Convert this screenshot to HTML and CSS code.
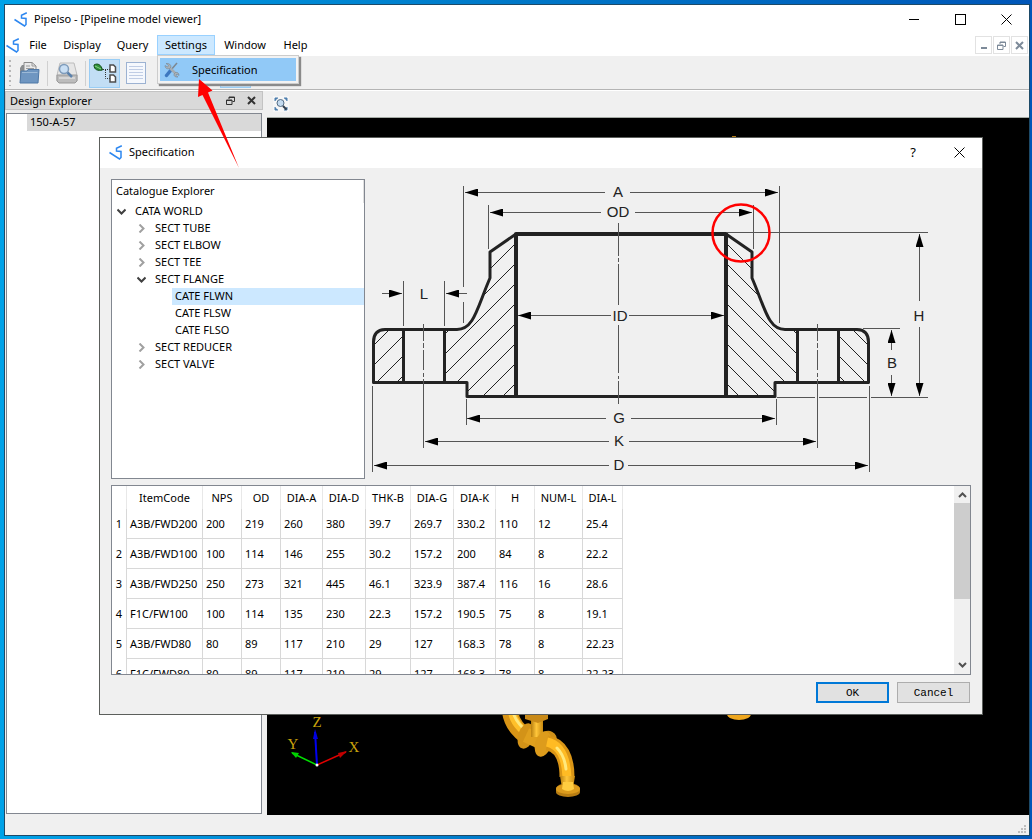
FILE: index.html
```html
<!DOCTYPE html>
<html lang="en">
    <head>
        <meta charset="utf-8">
        <title>Pipelso - [Pipeline model viewer]</title>
        <link rel="stylesheet" href="styles.css">
    </head>
    <body>
        <!-- shared symbols -->
        <svg class="defs" aria-hidden="true">
            <symbol id="logo" viewBox="0 0 14 15">
                <path d="M.5 7.5L10.5 14L12 12.500V6.500L7.500 6V3.200L12.800 .8" fill="none" stroke="#2d87f0" stroke-width="1.500"/>
            </symbol>
            <symbol id="cross" viewBox="0 0 11 11">
                <path d="M.5 .5L10.500 10.500M10.500 .5L.5 10.500" stroke="#000" fill="none"/>
            </symbol>
            <symbol id="restore" viewBox="0 0 9 9">
                <path d="M3 3V1H8.500V5.500H6.500M3 1.500H8.500" fill="none" stroke="currentColor"/>
                <path d="M.5 4H6V8.500H.5ZM.5 4.500H6" fill="none" stroke="currentColor"/>
            </symbol>
            <symbol id="small_cross" viewBox="0 0 9 9">
                <path d="M1 1L8 8M8 1L1 8" fill="none" stroke="currentColor" stroke-width="2"/>
            </symbol>
            <symbol id="open" viewBox="0 0 9 9">
                <path d="M.5 2.500L4.500 6.500L8.500 2.500" fill="none" stroke="#404040" stroke-width="2"/>
            </symbol>
            <symbol id="closed" viewBox="0 0 9 9">
                <path d="M2.500 .5L6.500 4.500L2.500 8.500" fill="none" stroke="#a0a0a0" stroke-width="2"/>
            </symbol>
        </svg>

        <div class="window">
            <header class="titlebar">
                <svg class="logo"><use href="#logo"/></svg>
                <span class="title">Pipelso - [Pipeline model viewer]</span>
                <button class="ctl" aria-label="Minimize"><svg width="11" height="11"><path d="M0 5.500H10" stroke="#000"/></svg></button>
                <button class="ctl" aria-label="Maximize"><svg width="11" height="11"><rect x=".5" y=".5" width="10" height="10" fill="none" stroke="#000"/></svg></button>
                <button class="ctl" aria-label="Close"><svg width="11" height="11"><use href="#cross"/></svg></button>
            </header>

            <nav class="menubar">
                <svg class="logo"><use href="#logo"/></svg>
                <button class="menu file">File</button>
                <button class="menu display">Display</button>
                <button class="menu query">Query</button>
                <div class="menu_holder">
                    <button class="menu settings active">Settings</button>
                    <div class="popup">
                        <button class="popup_item">
                            <svg width="16" height="16" viewBox="0 0 16 16">
                                <path d="M13 1L6.500 8.500" stroke="#7d8790" stroke-width="1.500"/>
                                <path d="M7 8L2.500 13.500" stroke="#3d78c0" stroke-width="3.500" stroke-linecap="round"/>
                                <path d="M4.500 4.500L12.500 12.500" stroke="#a4acb3" stroke-width="2.500"/>
                                <path d="M2 1.500L4.500 3.500L3.500 5L1 3.500C1 6 3 7.500 5.500 6.500L7 5C7 2.500 5 1 2 1.500ZM10 12C9.500 14 11.500 15.500 14 15L11.800 13.200L13 12L15 13.500C15 11 13.500 10 11.500 10.500Z" fill="#a9b1b8" stroke="#6f7a84" stroke-width=".5"/>
                            </svg>
                            Specification
                        </button>
                    </div>
                </div>
                <button class="menu win">Window</button>
                <button class="menu help">Help</button>
                <div class="mdi">
                    <button aria-label="Minimize view"><svg width="9" height="9"><rect x="2" y="6" width="6" height="2" fill="currentColor"/></svg></button>
                    <button aria-label="Restore view"><svg width="9" height="9"><use href="#restore"/></svg></button>
                    <button aria-label="Close view"><svg width="9" height="9"><use href="#small_cross"/></svg></button>
                </div>
            </nav>

            <div class="toolbar">
                <span class="grip"></span>
                <button class="tool" aria-label="Open">
                    <svg width="24" height="24" viewBox="0 0 24 24">
                        <path d="M3 20V7L5 4H9V20Z" fill="#8a8d90"/>
                        <path d="M7 12V1.500H15L19 5V12Z" fill="#e9e9e9" stroke="#8b8b8b"/>
                        <path d="M15 1.500V5H19M9 5H13M9 7.500H17" fill="none" stroke="#9a9a9a"/>
                        <path d="M4 10H10L11 8.500H22L21 22H3Z" fill="#6f96c1" stroke="#4f78a6"/>
                        <path d="M5 11.500H20.500" stroke="#9cb9d7"/>
                    </svg>
                </button>
                <span class="sep"></span>
                <button class="tool" aria-label="Print preview">
                    <svg width="24" height="24" viewBox="0 0 24 24">
                        <path d="M5 2H19L22 14V20H2V14Z" fill="#e6e6e6" stroke="#bcbcbc"/>
                        <path d="M2 14H22V20L20 22H4L2 20Z" fill="#bcbcbc" stroke="#999"/>
                        <path d="M4 17H20" stroke="#efefef"/>
                        <circle cx="9" cy="8" r="4.500" fill="#c9dff4" stroke="#7f9cbb" stroke-width="1.500"/>
                        <path d="M12.500 11.500L17 16" stroke="#5c82ac" stroke-width="2.500"/>
                    </svg>
                </button>
                <span class="sep"></span>
                <button class="tool on" aria-label="Design explorer">
                    <svg width="24" height="24" viewBox="0 0 24 24">
                        <path d="M1 4C4 2 8 3 9.500 9C5 10 1 9 1 4Z" fill="#2f9138" stroke="#154d1b"/>
                        <path d="M2 5L8 8" stroke="#8bd38a"/>
                        <path d="M10 8.500H17M12.500 9V17.500H17" fill="none" stroke="#333" stroke-dasharray="1 1"/>
                        <path d="M17 4H20.500L22.500 6V11H17ZM17 14H20.500L22.500 16V21H17Z" fill="#fff" stroke="#4d4d4d" stroke-width="1.500"/>
                    </svg>
                </button>
                <button class="tool" aria-label="List">
                    <svg width="24" height="24" viewBox="0 0 24 24">
                        <rect x="2.500" y="1.500" width="19" height="21" fill="#f5f8fd" stroke="#9cb2d2"/>
                        <path d="M5 5.500H19M5 8.500H19M5 11.500H19M5 14.500H19M5 17.500H19" stroke="#c0cde5"/>
                    </svg>
                </button>
                <button class="tool" aria-label="Print">
                    <svg width="24" height="24" viewBox="0 0 24 24"><rect x="3" y="10" width="18" height="14" rx="3" fill="#6d6d6d"/></svg>
                </button>
                <span class="sep"></span>
                <button class="tool" aria-label="Select"></button>
                <button class="tool on" aria-label="Zoom">
                    <svg width="24" height="24" viewBox="0 0 24 24"><path d="M12 15L20 23" stroke="#2f6fb5" stroke-width="4"/></svg>
                </button>
                <span class="sep"></span>
                <button class="tool" aria-label="Rotate">
                    <svg width="24" height="24" viewBox="0 0 24 24"><circle cx="13" cy="15" r="8" fill="#6f747b"/></svg>
                </button>
            </div>

            <div class="main">
                <aside class="dock">
                    <div class="dock_title">
                        <span>Design Explorer</span>
                        <button aria-label="Float"><svg width="9" height="9"><use href="#restore"/></svg></button>
                        <button aria-label="Close explorer"><svg width="9" height="9"><use href="#small_cross"/></svg></button>
                    </div>
                    <ul class="design_tree">
                        <li>150-A-57</li>
                    </ul>
                </aside>
                <section class="view">
                    <div class="view_bar">
                        <button aria-label="Zoom extents">
                            <svg width="16" height="16" viewBox="0 0 16 16">
                                <path d="M2 5V2H5M11 2H14V5M14 11V14H11M5 14H2V11" fill="#4d7fae" stroke="#4d7fae"/>
                                <circle cx="7.500" cy="7" r="3.500" fill="#c4dbf0" stroke="#536c85"/>
                                <path d="M10 10L13.500 13.500" stroke="#333f4c" stroke-width="2"/>
                            </svg>
                        </button>
                    </div>
                    <div class="canvas">
                        <svg viewBox="267 118 762 697" preserveAspectRatio="xMinYMin meet">
                            <defs>
                                <linearGradient id="pipe" x1="0" y1="0" x2="1" y2="0">
                                    <stop offset="0" stop-color="#b87f10"/>
                                    <stop offset=".45" stop-color="#ffc63a"/>
                                    <stop offset="1" stop-color="#c98a10"/>
                                </linearGradient>
                            </defs>
                            <path d="M732 137V136H736V137H764V140H732Z" fill="#b47b12"/>
                            <!-- valve and elbow -->
                            <path d="M510 712C512 724 519 732 529 738" fill="none" stroke="#d99516" stroke-width="16"/>
                            <path d="M512 712C514 723 521 730 531 736" fill="none" stroke="#ffc02a" stroke-width="8"/>
                            <path d="M513 712C515 720 519 724 523 728" fill="none" stroke="#ffe87c" stroke-width="3"/>
                            <ellipse cx="526" cy="736" rx="8" ry="13" transform="rotate(18 526 736)" fill="#d39318"/>
                            <path d="M526 735L550 746" stroke="#e0a01e" stroke-width="15"/>
                            <rect x="531" y="716" width="12" height="21" fill="url(#pipe)"/>
                            <path d="M525 712H548V719L538 723L525 719Z" fill="#c98a18"/>
                            <ellipse cx="549" cy="738" rx="8" ry="7" transform="rotate(25 549 738)" fill="#cf9018"/>
                            <ellipse cx="543" cy="744" rx="8" ry="13" transform="rotate(15 543 744)" fill="#dd9c1c"/>
                            <path d="M547 743C561 745 567 758 567 777" fill="none" stroke="#d99516" stroke-width="15"/>
                            <path d="M547 742C561 745 566 758 567 777" fill="none" stroke="#ffbb24" stroke-width="9"/>
                            <path d="M557 748C562 753 565 760 566 769" fill="none" stroke="#ffe87c" stroke-width="3" stroke-linecap="round"/>
                            <path d="M560 776H575L573 788H562Z" fill="url(#pipe)"/>
                            <path d="M556 789A12 6 0 0 1 580 789V792A12 5 0 0 1 556 792Z" fill="#b87d12"/>
                            <ellipse cx="568" cy="789" rx="12" ry="5" fill="#dc9b1c"/>
                            <path d="M563 782H573L574 789Q568 793 562 789Z" fill="#ffcc40"/>
                            <ellipse cx="739" cy="714" rx="12" ry="6" fill="#efa71e"/>
                            <!-- axes -->
                            <path d="M317 765L292 753" stroke="#00e000" stroke-width="1.500"/>
                            <path d="M291 752L299 753L296 758Z" fill="#00d000"/>
                            <path d="M317 765L346 752" stroke="#e00000" stroke-width="1.500"/>
                            <path d="M347 751L338 753L340 758Z" fill="#c00000"/>
                            <path d="M317 765L315 732" stroke="#0000f0" stroke-width="2"/>
                            <path d="M315 729L313 739H318Z" fill="#0000e0"/>
                            <circle cx="317" cy="765" r="1.500" fill="#fff"/>
                            <g class="axis_name">
                                <text x="317" y="727">Z</text>
                                <text x="293" y="749">Y</text>
                                <text x="354" y="752">X</text>
                            </g>
                        </svg>
                    </div>
                </section>
            </div>
            <footer class="statusbar">
                <svg width="9" height="9"><path d="M6 0h2v2h-2zM3 3h2v2h-2zM6 3h2v2h-2zM0 6h2v2h-2zM3 6h2v2h-2zM6 6h2v2h-2z" fill="#bdbdbd"/></svg>
            </footer>
        </div>

        <div class="dialog" role="dialog" aria-label="Specification">
            <header class="titlebar">
                <svg class="logo"><use href="#logo"/></svg>
                <span class="title">Specification</span>
                <button class="ctl help_btn" aria-label="Help">?</button>
                <button class="ctl" aria-label="Close dialog"><svg width="11" height="11"><use href="#cross"/></svg></button>
            </header>
            <div class="dialog_body">
                <div class="upper">
                    <div class="catalogue">
                        <div class="catalogue_head">Catalogue Explorer</div>
                        <ul>
                            <li class="lv1"><svg><use href="#open"/></svg><span>CATA WORLD</span></li>
                            <li class="lv2"><svg><use href="#closed"/></svg><span>SECT TUBE</span></li>
                            <li class="lv2"><svg><use href="#closed"/></svg><span>SECT ELBOW</span></li>
                            <li class="lv2"><svg><use href="#closed"/></svg><span>SECT TEE</span></li>
                            <li class="lv2"><svg><use href="#open"/></svg><span>SECT FLANGE</span></li>
                            <li class="lv3 selected"><span>CATE FLWN</span></li>
                            <li class="lv3"><span>CATE FLSW</span></li>
                            <li class="lv3"><span>CATE FLSO</span></li>
                            <li class="lv2"><svg><use href="#closed"/></svg><span>SECT REDUCER</span></li>
                            <li class="lv2"><svg><use href="#closed"/></svg><span>SECT VALVE</span></li>
                        </ul>
                    </div>
                    <svg class="drawing" viewBox="365 179 606 300" preserveAspectRatio="xMinYMin meet">
                        <defs>
                            <clipPath id="section">
                                <path d="M516 234L490 252V278C478 306 473 329 457 329.500H444.500V382.500H467V396.500H516ZM403.500 329.500H385Q373.500 330 373.500 342V382.500H403.500Z"/>
                            </clipPath>
                            <marker id="arrow" viewBox="0 0 13 8" refX="13" refY="4" markerWidth="13" markerHeight="8" markerUnits="userSpaceOnUse" orient="auto-start-reverse">
                                <path d="M0 0L13 4L0 8Z" fill="#000"/>
                            </marker>
                            <!-- left half of the flange, mirrored for the right one -->
                            <g id="half">
                                <path class="hatch" clip-path="url(#section)" d="M370 349L520 199M370 369L520 219M370 389L520 239M370 409L520 259M370 429L520 279M370 449L520 299M370 469L520 319M370 489L520 339M370 509L520 359M370 529L520 379"/>
                                <path class="outline" d="M516 234L490 252V278C477 308 474 329.500 457 329.500H385Q373.500 330 373.500 342V382.500H467V396.500H622"/>
                                <path class="outline" d="M403.500 329.500V382.500M444.500 329.500V382.500"/>
                                <path class="outline bold" d="M622 234H516V396"/>
                            </g>
                        </defs>
                        <use href="#half"/>
                        <use href="#half" transform="translate(1242 0) scale(-1 1)"/>
                        <!-- extension and centre lines -->
                        <path class="thin" d="M463.500 186V287M463.500 302V323M488.500 205V249M753.500 205V249M779.500 186V323M403.500 281V326M444.500 281V326M466.500 399V425M776.500 399V425M372.500 386V472M869.500 386V472M727 232.500H928M777 397.500H815M819 397.500H867M871 397.500H928M863 328.500H900"/>
                        <path class="thin" d="M618.500 223V256M618.500 258V262M618.500 264V305M618.500 325V373M618.500 376V379M618.500 381V404M423.500 324V341M423.500 343V348M423.500 350V370M423.500 373V377M423.500 379V448M817.500 324V341M817.500 343V348M817.500 350V370M817.500 373V377M817.500 379V448"/>
                        <!-- dimensions -->
                        <g class="thin" marker-end="url(#arrow)">
                            <path d="M605 192.500H465"/><path d="M630 192.500H778"/>
                            <path d="M601 212.500H490"/><path d="M635 212.500H752"/>
                            <path d="M611 315.500H518"/><path d="M629 315.500H724"/>
                            <path d="M606 418.500H467"/><path d="M631 418.500H775"/>
                            <path d="M609 441.500H425"/><path d="M629 441.500H816"/>
                            <path d="M609 465.500H374"/><path d="M628 465.500H868"/>
                            <path d="M382 293.500H402"/><path d="M467 293.500H446"/>
                            <path d="M919.500 301V234"/><path d="M919.500 327V396"/>
                            <path d="M891.500 350V330"/><path d="M891.500 375V396"/>
                        </g>
                        <g class="dim">
                            <text x="618" y="197">A</text>
                            <text x="618" y="217">OD</text>
                            <text x="424" y="299">L</text>
                            <text x="620" y="321">ID</text>
                            <text x="619" y="423">G</text>
                            <text x="619" y="446">K</text>
                            <text x="619" y="470">D</text>
                            <text x="919" y="321">H</text>
                            <text x="892" y="368">B</text>
                        </g>
                        <circle cx="741" cy="233" r="28.500" fill="none" stroke="#f00" stroke-width="2.500"/>
                    </svg>
                </div>

                <div class="table_box">
                    <div class="table_scroll">
                        <table id="spec">
                            <colgroup>
                                <col class="c_no"><col class="c_code"><col class="c_nps"><col class="c_nps"><col class="c_a"><col class="c_d"><col class="c_thk"><col class="c_d"><col class="c_a"><col class="c_nps"><col class="c_num"><col class="c_l">
                            </colgroup>
                            <thead>
                                <tr><th></th><th>ItemCode</th><th>NPS</th><th>OD</th><th>DIA-A</th><th>DIA-D</th><th>THK-B</th><th>DIA-G</th><th>DIA-K</th><th>H</th><th>NUM-L</th><th>DIA-L</th></tr>
                            </thead>
                            <tbody>
                                <tr><th>1</th><td>A3B/FWD200</td><td>200</td><td>219</td><td>260</td><td>380</td><td>39.7</td><td>269.7</td><td>330.2</td><td>110</td><td>12</td><td>25.4</td></tr>
                                <tr><th>2</th><td>A3B/FWD100</td><td>100</td><td>114</td><td>146</td><td>255</td><td>30.2</td><td>157.2</td><td>200</td><td>84</td><td>8</td><td>22.2</td></tr>
                                <tr><th>3</th><td>A3B/FWD250</td><td>250</td><td>273</td><td>321</td><td>445</td><td>46.1</td><td>323.9</td><td>387.4</td><td>116</td><td>16</td><td>28.6</td></tr>
                                <tr><th>4</th><td>F1C/FW100</td><td>100</td><td>114</td><td>135</td><td>230</td><td>22.3</td><td>157.2</td><td>190.5</td><td>75</td><td>8</td><td>19.1</td></tr>
                                <tr><th>5</th><td>A3B/FWD80</td><td>80</td><td>89</td><td>117</td><td>210</td><td>29</td><td>127</td><td>168.3</td><td>78</td><td>8</td><td>22.23</td></tr>
                                <tr><th>6</th><td>F1C/FWD80</td><td>80</td><td>89</td><td>117</td><td>210</td><td>29</td><td>127</td><td>168.3</td><td>78</td><td>8</td><td>22.23</td></tr>
                            </tbody>
                        </table>
                    </div>
                    <div class="scrollbar">
                        <button aria-label="Scroll up"><svg width="9" height="7"><path d="M1 6L4.500 2.500L8 6" fill="none" stroke="#505050" stroke-width="2"/></svg></button>
                        <div class="thumb"></div>
                        <button aria-label="Scroll down"><svg width="9" height="7"><path d="M1 1L4.500 4.500L8 1" fill="none" stroke="#505050" stroke-width="2"/></svg></button>
                    </div>
                </div>

                <div class="buttons">
                    <button class="btn default">OK</button>
                    <button class="btn">Cancel</button>
                </div>
            </div>
        </div>

        <!-- pointer to the menu entry -->
        <svg class="pointer" width="50" height="96" viewBox="193 74 50 96">
            <path d="M199 79L212.500 90.500L208 92.500L239 168L202.500 95L198 97Z" fill="#f00"/>
        </svg>
    </body>
</html>
```
FILE: styles.css
```css
* {
    box-sizing: border-box;
}
body {
    margin: 0;
    padding: 4px 2px 3px 4px;
    height: 100vh;
    position: relative;
    overflow: hidden;
    font-family: "Noto Sans", "Open Sans", sans-serif;
    font-size: 11px;
    line-height: 16px;
    color: #000;
    background: linear-gradient(to right, #00a2e8, #0078c8 50%, #0056b8);
}
button {
    font: inherit;
    color: inherit;
    background: none;
    border: 0;
    padding: 0;
}
svg {
    display: block;
}
ul {
    list-style: none;
    margin: 0;
    padding: 0;
}
.defs {
    position: absolute;
    width: 0;
    height: 0;
}

/* main window */
.window {
    height: 100%;
    display: flex;
    flex-direction: column;
    border: 1px solid #1d4a68;
    background: #f0f0f0;
}
.titlebar {
    display: flex;
    align-items: center;
    height: 30px;
    padding: 0 0 2px 9px;
    background: #fff;
    flex: none;
}
.logo {
    width: 14px;
    height: 15px;
    flex: none;
}
.title {
    flex: 1;
    padding-left: 6px;
}
.ctl {
    width: 46px;
    height: 28px;
    display: flex;
    align-items: center;
    justify-content: center;
}
.help_btn {
    font-size: 13px;
}

.menubar {
    display: flex;
    height: 22px;
    padding: 0 1px;
    background: #fff;
    border-bottom: 1px solid #f0f0f0;
    flex: none;
}
.menubar .logo {
    margin-top: 3px;
}
.menu {
    display: block;
    height: 20px;
    text-align: center;
}
.file { width: 36px; }
.display { width: 52px; }
.query { width: 49px; }
.settings { width: 58px; }
.win { width: 60px; }
.help { width: 41px; }
.menu.active {
    background: #cce8ff;
    border: 1px solid #99d1ff;
}
.menu_holder {
    position: relative;
}
.popup {
    position: absolute;
    z-index: 2;
    top: 20px;
    left: 0;
    width: 142px;
    padding: 2px;
    background: #f2f2f2;
    border: 1px solid #ccc;
    box-shadow: 2px 2px 1px #8a8a8a;
}
.popup_item {
    display: flex;
    align-items: center;
    gap: 12px;
    width: 100%;
    height: 23px;
    padding-left: 4px;
    background: #91c9f7;
}
.mdi {
    display: flex;
    gap: 1px;
    margin-left: auto;
    padding-top: 1px;
}
.mdi button {
    display: flex;
    align-items: center;
    justify-content: center;
    width: 17px;
    height: 18px;
    border: 1px solid #e2e2e2;
    color: #7d8a99;
}

.toolbar {
    display: flex;
    align-items: center;
    height: 34px;
    padding: 0 0 1px 4px;
    border-bottom: 1px solid #fff;
    box-shadow: inset 0 -1px #b4b4b4;
    flex: none;
}
.grip {
    width: 2px;
    height: 26px;
    background: repeating-linear-gradient(#b8b8b8 0 2px, transparent 2px 5px);
}
.tool {
    display: flex;
    align-items: center;
    justify-content: center;
    width: 31px;
    height: 29px;
}
.grip + .tool {
    margin-left: 2px;
}
.tool.on {
    background: #c2def5;
    border: 1px solid #99cdf5;
}
.sep {
    width: 1px;
    height: 25px;
    margin: 0 3px;
    background: #d0d0d0;
}

.main {
    display: flex;
    gap: 4px;
    flex: 1;
    min-height: 0;
}
.dock {
    display: flex;
    flex-direction: column;
    gap: 3px;
    width: 258px;
    padding-bottom: 1px;
    flex: none;
}
.dock_title {
    display: flex;
    align-items: center;
    gap: 12px;
    height: 19px;
    padding: 0 6px 0 4px;
    background: #d9d9d9;
    border: 1px solid #c3c3c3;
}
.dock_title span {
    flex: 1;
}
.dock_title button {
    color: #333;
}
.design_tree {
    flex: 1;
    margin: 0 1px;
    padding-left: 20px;
    background: #fff;
    border: 1px solid #828790;
}
.design_tree li {
    height: 17px;
    padding-left: 3px;
    background: #d9d9d9;
}
.view {
    display: flex;
    flex-direction: column;
    flex: 1;
    min-width: 0;
}
.view_bar {
    height: 27px;
    padding: 5px 6px;
    border-bottom: 1px solid #a5aba5;
}
.view_bar button {
    background: #f6f6f6;
}
.canvas {
    flex: 1;
    min-height: 0;
    background: #000;
    overflow: hidden;
}
.canvas svg {
    width: 100%;
    height: 100%;
}
.axis_name text {
    font-family: "Liberation Serif", serif;
    font-size: 15px;
    text-anchor: middle;
    fill: #c9a20c;
}
.statusbar {
    display: flex;
    justify-content: flex-end;
    align-items: flex-end;
    height: 20px;
    padding: 1px 2px;
    flex: none;
}

/* specification dialog */
.dialog {
    position: absolute;
    top: 137px;
    left: 99px;
    right: 49px;
    background: #f0f0f0;
    border: 1px solid #5c5f5c;
}
.dialog_body {
    display: flex;
    flex-direction: column;
    gap: 6px;
    padding: 11px;
}
.upper {
    display: flex;
    height: 300px;
}
.catalogue {
    width: 254px;
    flex: none;
    background: #fff;
    border: 1px solid #828790;
}
.catalogue_head {
    height: 23px;
    padding-left: 4px;
    line-height: 22px;
    border-right: 1px solid #e0e0e0;
}
.catalogue li {
    display: flex;
    align-items: center;
    height: 17px;
}
.catalogue li svg {
    width: 9px;
    height: 9px;
    margin-right: 6px;
}
.catalogue li span {
    flex: 1;
    height: 17px;
    padding-left: 3px;
}
.lv1 { padding-left: 5px; }
.lv2 { padding-left: 25px; }
.lv3 { padding-left: 60px; }
.selected span {
    background: #cce8ff;
}

.drawing {
    flex: 1;
    min-width: 0;
    height: 300px;
}
.outline {
    fill: none;
    stroke: #222;
    stroke-width: 3;
    stroke-linejoin: round;
}
.outline.bold {
    stroke-width: 4;
}
.hatch {
    fill: none;
    stroke: #222;
    stroke-width: 1;
}
.thin {
    fill: none;
    stroke: #555;
    stroke-width: 1;
}
.dim text {
    font-family: "Liberation Sans", sans-serif;
    font-size: 15px;
    text-anchor: middle;
    fill: #222;
}

.table_box {
    display: flex;
    height: 190px;
    background: #fff;
    border: 1px solid #828790;
}
.table_scroll {
    flex: 1;
    min-width: 0;
    overflow: hidden;
}
#spec {
    table-layout: fixed;
    width: 511px;
    border-collapse: separate;
    border-spacing: 0;
}
#spec th, #spec td {
    height: 30px;
    padding: 0;
    font-weight: normal;
    white-space: nowrap;
    border-right: 1px solid #d8d8d8;
}
#spec thead th {
    height: 23px;
    border-right-color: #e8e8e8;
}
#spec td {
    padding-left: 3px;
    border-bottom: 1px solid #d8d8d8;
}
.c_no { width: 15px; }
.c_code { width: 76px; }
.c_nps { width: 39px; }
.c_a { width: 42px; }
.c_d { width: 43px; }
.c_thk { width: 45px; }
.c_num { width: 48px; }
.c_l { width: 40px; }

.scrollbar {
    display: flex;
    flex-direction: column;
    width: 16px;
    background: #f0f0f0;
}
.scrollbar button {
    display: flex;
    align-items: center;
    justify-content: center;
    height: 17px;
}
.scrollbar button:last-child {
    margin-top: auto;
}
.thumb {
    height: 96px;
    background: #cdcdcd;
}

.buttons {
    display: flex;
    justify-content: flex-end;
    gap: 8px;
    padding: 1px 1px 0 0;
}
.btn {
    width: 73px;
    height: 21px;
    font-family: "Liberation Mono", monospace;
    background: #e1e1e1;
    border: 1px solid #adadad;
}
.btn.default {
    border: 2px solid #0078d7;
}

.pointer {
    position: absolute;
    z-index: 3;
    top: 74px;
    left: 193px;
}
```
